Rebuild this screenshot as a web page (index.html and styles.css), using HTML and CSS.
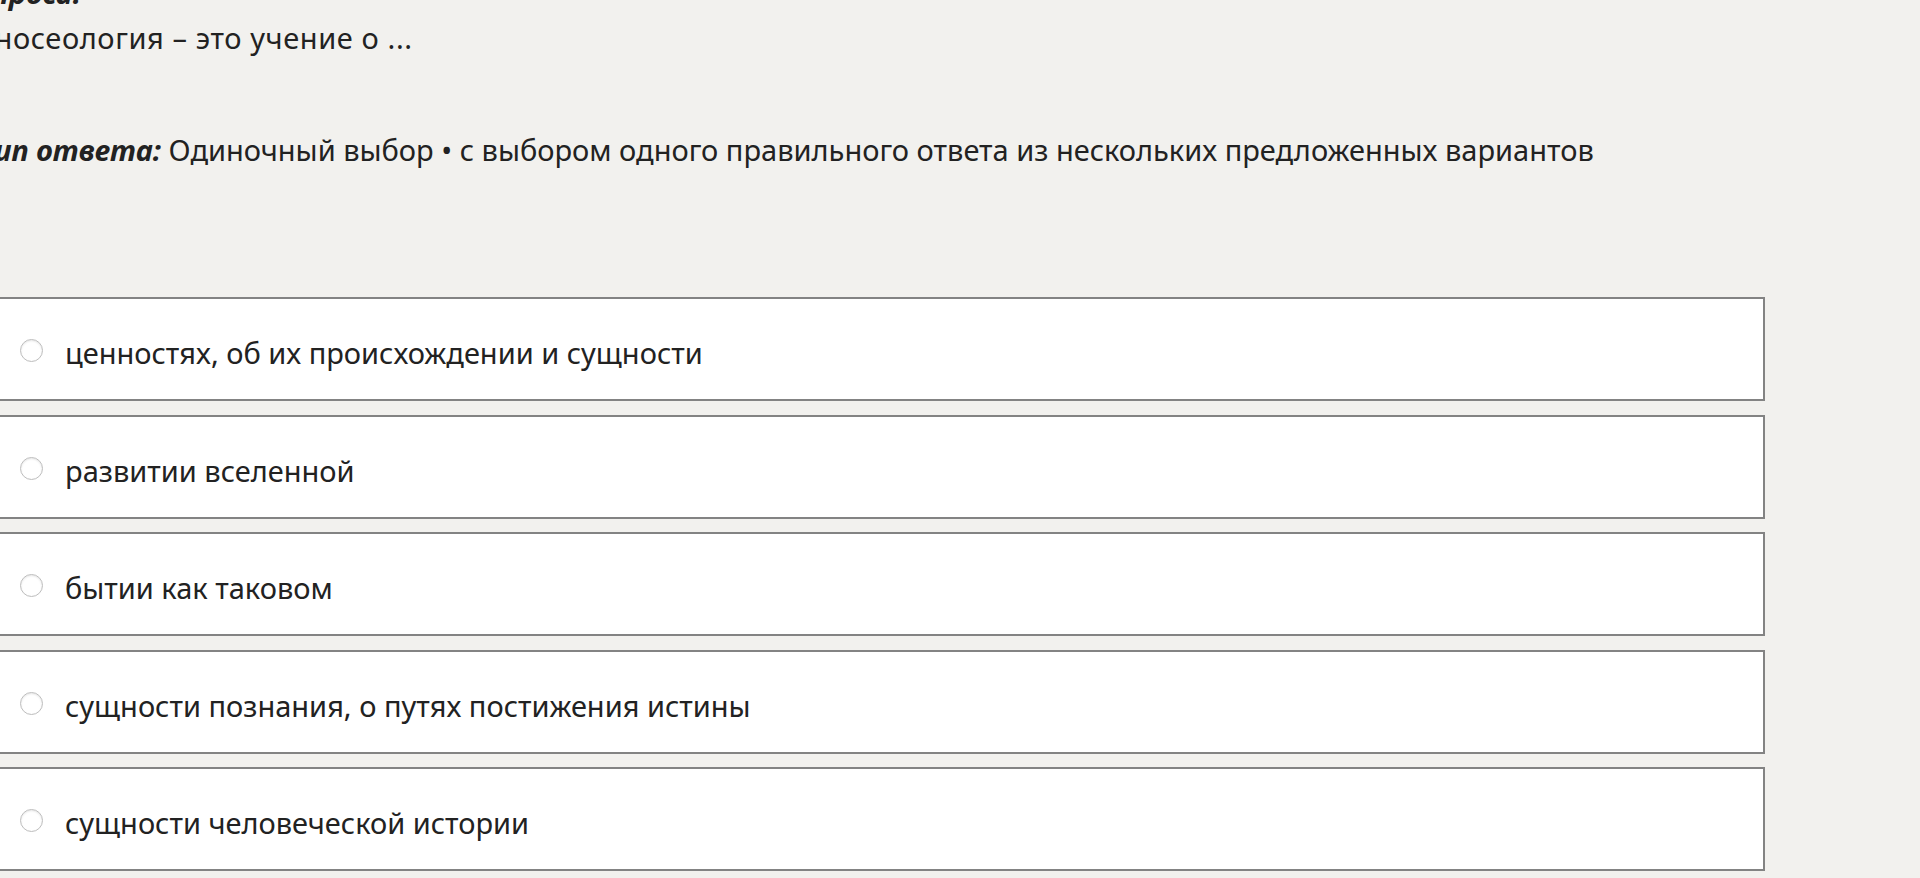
FILE: index.html
```html
<!DOCTYPE html>
<html lang="ru">
<head>
  <meta charset="utf-8">
  <title>Вопрос теста</title>
  <link rel="stylesheet" href="styles.css">
</head>
<body>

  <div class="page">
    <div class="question">
      <p class="caption"><em>Текст вопроса:</em></p>
      <p class="question-text">Гносеология – это учение о ...</p>
      <p class="answer-type"><em>Тип ответа:</em> Одиночный выбор • с выбором одного правильного ответа из нескольких предложенных вариантов</p>
    </div>

    <ul class="options">
      <li class="option">
        <label><input type="radio" name="answer"><span>ценностях, об их происхождении и сущности</span></label>
      </li>
      <li class="option">
        <label><input type="radio" name="answer"><span>развитии вселенной</span></label>
      </li>
      <li class="option">
        <label><input type="radio" name="answer"><span>бытии как таковом</span></label>
      </li>
      <li class="option">
        <label><input type="radio" name="answer"><span>сущности познания, о путях постижения истины</span></label>
      </li>
      <li class="option">
        <label><input type="radio" name="answer"><span>сущности человеческой истории</span></label>
      </li>
    </ul>
  </div>

</body>
</html>
```

FILE: styles.css
```css
body {
  margin: 0;
  background: #f2f1ee;
  color: #222;
  font-family: 'Noto Sans', 'Open Sans', sans-serif;
  font-size: 29px;
  overflow: hidden;
}

p {
  margin: 0;
}

em {
  font-weight: bold;
  font-style: italic;
}

.page {
  margin-left: -20px;
}

.question {
  line-height: 40px;
}

.caption {
  margin: -27px 0 0 -112px;
}

.question-text {
  margin-top: 5px;
  letter-spacing: 0.6px;
}

.answer-type {
  margin-top: 72px;
}

.options {
  list-style: none;
  margin: 127px 155px 0 -10px;
  padding: 0;
}

.option {
  height: 104px;
  margin-bottom: 13.5px;
  background: #fff;
  border: 2px solid #838383;
  box-sizing: border-box;
}

.option label {
  display: flex;
  align-items: center;
  gap: 22px;
  height: 100%;
  padding-left: 48px;
  cursor: pointer;
}

.option span {
  padding-top: 7px;
}

.option input {
  appearance: none;
  -webkit-appearance: none;
  width: 23px;
  height: 23px;
  margin: 3px 0 0;
  border: 1px solid #bdbdbd;
  border-radius: 50%;
  background: #fff;
  box-shadow: inset 0 1px 2px rgba(0,0,0,0.1);
  flex-shrink: 0;
}
```
